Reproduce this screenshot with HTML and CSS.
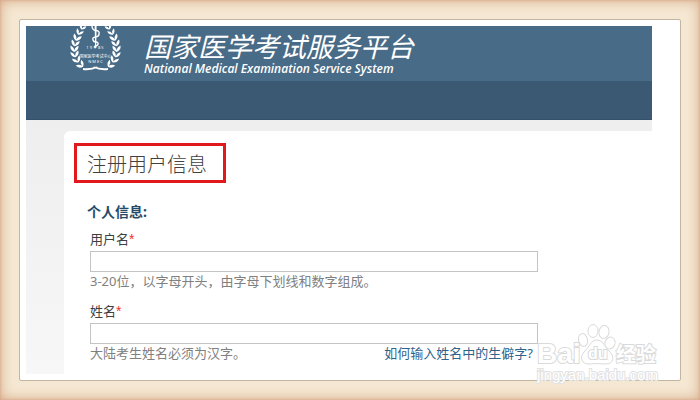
FILE: index.html
```html
<!DOCTYPE html>
<html lang="zh-CN">
<head>
  <meta charset="UTF-8" />
  <meta name="viewport" content="width=device-width, initial-scale=1.0"/>
  <title>国家医学考试服务平台</title>
  <link rel="stylesheet" href="styles.css">
</head>
<body>

  <div class="frame">
    <div class="paper">
      <div class="site">

        <header class="header">
          <svg class="emblem" width="52" height="46" viewBox="0 0 52 46" fill="#fff" aria-hidden="true">
            <defs>
              <path id="leaf" d="M0 3.4Q-4.6 1.6-4-2.8-.6-1.4 0 2 .6-1.4 4-2.8 4.6 1.6 0 3.4Z"/>
              <g id="branch">
                <use href="#leaf" transform="translate(12.5 1) rotate(24) scale(.8)"/>
                <use href="#leaf" transform="translate(9.5 6) rotate(26) scale(.9)"/>
                <use href="#leaf" transform="translate(7 11.5) rotate(20)"/>
                <use href="#leaf" transform="translate(5.2 17) rotate(12)"/>
                <use href="#leaf" transform="translate(4.4 22.5) rotate(2)"/>
                <use href="#leaf" transform="translate(4.8 28) rotate(-10)"/>
                <use href="#leaf" transform="translate(6.8 33.5) rotate(-26)"/>
                <use href="#leaf" transform="translate(10.5 38.5) rotate(-48)"/>
                <path d="M13 42Q20 43 27 40.5L28 41.6Q21 45 13 44Z"/>
              </g>
            </defs>
            <use href="#branch"/>
            <use href="#branch" transform="matrix(-1 0 0 1 51 0)"/>
            <!-- staff and snake -->
            <path d="M24.6 0h2l-.4 22h-1Z"/>
            <path d="M22 0Q22 4 26 4.500T29 8Q29 10.500 25.500 11T23 14Q23.500 16 26 16T28 18.500Q27 20 25 20" fill="none" stroke="#fff" stroke-width="1.400"/>
            <text x="25" y="23" class="emblem-text">1 9 ♦ 8 5</text>
            <text x="25.500" y="32" class="emblem-text">国家医学考试中心</text>
            <text x="25.500" y="37" class="emblem-text">N M E C</text>
          </svg>
          <div class="brand">
            <h1 class="brand-cn">国家医学考试服务平台</h1>
            <p class="brand-en">National Medical Examination Service System</p>
          </div>
        </header>

        <nav class="navbar"></nav>

        <main class="content">
          <form class="card">
            <h2 class="page-title">注册用户信息</h2>

            <h3 class="section-title">个人信息:</h3>

            <div class="field">
              <label for="username">用户名<span class="required">*</span></label>
              <input type="text" id="username" name="username">
              <p class="hint">3-20位，以字母开头，由字母下划线和数字组成。</p>
            </div>

            <div class="field">
              <label for="realname">姓名<span class="required">*</span></label>
              <input type="text" id="realname" name="realname">
              <div class="hint-row">
                <p class="hint">大陆考生姓名必须为汉字。</p>
                <a href="#">如何输入姓名中的生僻字?</a>
              </div>
            </div>
          </form>
        </main>

      </div>
    </div>

    <svg class="watermark" width="126" height="64" viewBox="0 0 126 64">
      <g class="wm-paw">
        <ellipse cx="47" cy="18" rx="4.500" ry="6.500" transform="rotate(-12 47 18)"/>
        <ellipse cx="57" cy="9" rx="5" ry="6.500"/>
        <ellipse cx="68" cy="10" rx="5" ry="6.500" transform="rotate(10 68 10)"/>
        <ellipse cx="74" cy="21" rx="5" ry="6" transform="rotate(20 74 21)"/>
        <path d="M61 18C67 18 69 25 73 29C79 34 78 42 70 42C65 42 59 41 54 42C45 43 43 34 49 29C53 25 55 18 61 18Z"/>
      </g>
      <text x="1" y="41" class="wm-bai">Bai</text>
      <text x="52" y="37" class="wm-du">du</text>
      <text x="80" y="40" class="wm-cn">经验</text>
      <text x="1" y="58" class="wm-url">jingyan.baidu.com</text>
    </svg>
  </div>

</body>
</html>
```
FILE: styles.css
```css
:root {
  --header: #486b87;
  --nav: #3b5972;
  --frame: #f5e8d3;
  --link: #2f638c;
  --hint: #808080;
  --mark: #e1191d;
}

* {
  box-sizing: border-box;
}

body {
  margin: 0;
  font-family: "Noto Sans", "Noto Sans CJK SC", sans-serif;
  font-size: 13px;
  line-height: 18px;
  color: #404040;
}

h1, h2, h3, p {
  margin: 0;
}

.frame {
  position: relative;
  display: flex;
  min-height: 100vh;
  padding: 19px;
  background: var(--frame);
  box-shadow: inset 0 0 14px #d4a583, inset 0 0 3px #cf9f7c;
}

.paper {
  flex: 1;
  padding: 6px 28px 6px 6px;
  background: #fff;
  border: 1px solid #c4b5a2;
  border-radius: 2px;
}

/* header */
.header {
  display: flex;
  height: 55px;
  padding-left: 44px;
  background: var(--header);
  color: #fff;
}

.emblem {
  flex: none;
}

.emblem-text {
  font-size: 4px;
  text-anchor: middle;
}

.brand {
  margin-left: 22px;
  padding-top: 7px;
  white-space: nowrap;
}

.brand-cn {
  font-size: 27px;
  font-weight: 400;
  font-style: italic;
  line-height: 28px;
}

.brand-en {
  font-family: "Open Sans", sans-serif;
  font-size: 12px;
  font-weight: 600;
  font-style: italic;
  line-height: 16px;
}

.navbar {
  height: 39px;
  background: var(--nav);
  border-bottom: 1px solid #34506a;
}

/* form */
.content {
  padding: 11px 0 0 38px;
  background: linear-gradient(#eeeeee, #f7f7f7);
}

.card {
  padding: 12px 10px;
  background: #fff;
  border-top-left-radius: 6px;
}

.page-title {
  width: fit-content;
  padding: 4px 16px 0 10px;
  border: 3px solid var(--mark);
  font-size: 20px;
  font-weight: 300;
  line-height: 30px;
}

.section-title {
  margin: 19px 0 8px 13px;
  font-size: 14px;
  line-height: 20px;
  color: #264b69;
}

.field {
  width: 448px;
  max-width: 100%;
  margin: 0 0 12px 16px;
}

.field:last-child {
  margin-bottom: 0;
}

.field label {
  display: block;
}

.required {
  font-family: "Liberation Sans", sans-serif;
  font-size: 14px;
  color: #f03030;
}

.field input {
  display: block;
  width: 100%;
  height: 21px;
  margin-top: 3px;
  padding: 0 4px;
  border: 1px solid #c4c4c4;
  background: #fff;
  font: inherit;
}

.hint {
  color: var(--hint);
}

.hint-row {
  display: flex;
  justify-content: space-between;
  padding-right: 5px;
}

.hint-row a {
  color: var(--link);
  text-decoration: none;
}

/* watermark in the corner */
.watermark {
  position: absolute;
  right: 38px;
  bottom: 14px;
  fill: #fff;
  stroke: #dadada;
  pointer-events: none;
}

.watermark text {
  paint-order: stroke;
  stroke-width: 2px;
  font-weight: 700;
}

.wm-bai {
  font-family: "Liberation Sans", sans-serif;
  font-size: 28px;
}

.wm-du {
  font-family: "Liberation Sans", sans-serif;
  font-size: 16px;
}

.wm-cn {
  font-size: 20px;
}

.watermark .wm-url {
  font-family: "Liberation Sans", sans-serif;
  font-size: 15px;
  font-weight: 400;
  stroke: #e2e2e2;
}
```
